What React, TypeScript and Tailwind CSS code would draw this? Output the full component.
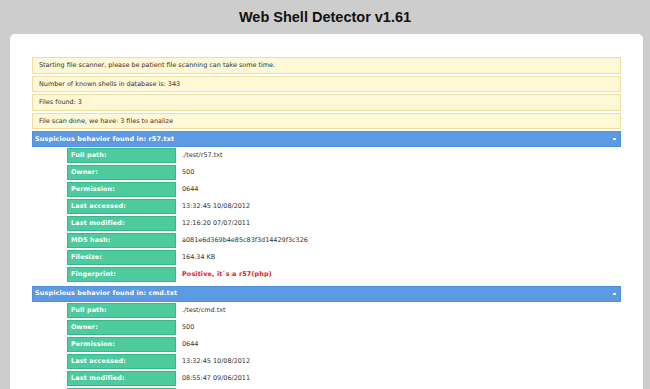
import React from "react";

type Row = { label: string; value: string; red?: boolean };

const sections: { file: string; rows: Row[] }[] = [
  {
    file: "r57.txt",
    rows: [
      { label: "Full path:", value: "./test/r57.txt" },
      { label: "Owner:", value: "500" },
      { label: "Permission:", value: "0644" },
      { label: "Last accessed:", value: "13:32:45 10/08/2012" },
      { label: "Last modified:", value: "12:16:20 07/07/2011" },
      { label: "MD5 hash:", value: "a081e6d369b4e85c83f3d14429f3c326" },
      { label: "Filesize:", value: "164.34 KB" },
      { label: "Fingerprint:", value: "Positive, it`s a r57(php)", red: true },
    ],
  },
  {
    file: "cmd.txt",
    rows: [
      { label: "Full path:", value: "./test/cmd.txt" },
      { label: "Owner:", value: "500" },
      { label: "Permission:", value: "0644" },
      { label: "Last accessed:", value: "13:32:45 10/08/2012" },
      { label: "Last modified:", value: "08:55:47 09/06/2011" },
      { label: "MD5 hash:", value: "5dba3e3a9e5d1a8a0ba4e4fbc2e0e2c1" },
      { label: "Filesize:", value: "1.42 KB" },
      { label: "Fingerprint:", value: "Positive, it`s a cmd(php)", red: true },
    ],
  },
];

const messages = [
  "Starting file scanner, please be patient file scanning can take some time.",
  "Number of known shells in database is: 343",
  "Files found: 3",
  "File scan done, we have: 3 files to analize",
];

export default function App() {
  return (
    <div className="min-h-[389px] bg-[#cdcdcd] overflow-hidden">
      <div className="h-[34px] flex items-center justify-center">
        <h1 className="font-['Liberation_Sans',Arial,sans-serif] font-bold text-[14.5px] text-[#111] leading-none">
          Web Shell Detector v1.61
        </h1>
      </div>
      <div className="ml-[10px] mr-[7px] bg-white rounded-t-[5px] min-h-[360px] pt-[23px] px-[22px] font-['DejaVu_Sans',Verdana,sans-serif] text-[6.45px] leading-none">
        <div className="flex flex-col gap-[2px]">
          {messages.map((m) => (
            <div
              key={m}
              className="h-[16.5px] flex items-center pl-[6px] bg-[#fff8d6] border border-[#eedf9f] text-[#333]"
            >
              {m}
            </div>
          ))}
        </div>
        <div className="mt-[2px]">
          {sections.map((s) => (
            <div key={s.file} className="mb-[3.5px]">
              <div className="h-[16px] flex items-center justify-between pl-[2px] pr-[3px] bg-[#5c9be2] border border-[#4f8fdb] text-white font-bold tracking-[0.12px]">
                <span>Suspicious behavior found in: {s.file}</span>
                <span className="w-[3px] h-[2px] bg-white mr-[1px]" />
              </div>
              <div className="flex flex-col gap-[2px] pt-[1px] ml-[35px]">
                {s.rows.map((r) => (
                  <div key={r.label} className="flex items-center h-[15px]">
                    <div className="w-[109px] h-full flex items-center pl-[3px] bg-[#4ecb9e] border border-[#35b98a] text-white font-bold tracking-[0.12px]">
                      {r.label}
                    </div>
                    <div
                      className={
                        r.red
                          ? "pl-[6px] text-[#e3221f] font-bold tracking-[0.12px]"
                          : "pl-[6px] text-[#333]"
                      }
                    >
                      {r.value}
                    </div>
                  </div>
                ))}
              </div>
            </div>
          ))}
        </div>
      </div>
    </div>
  );
}
